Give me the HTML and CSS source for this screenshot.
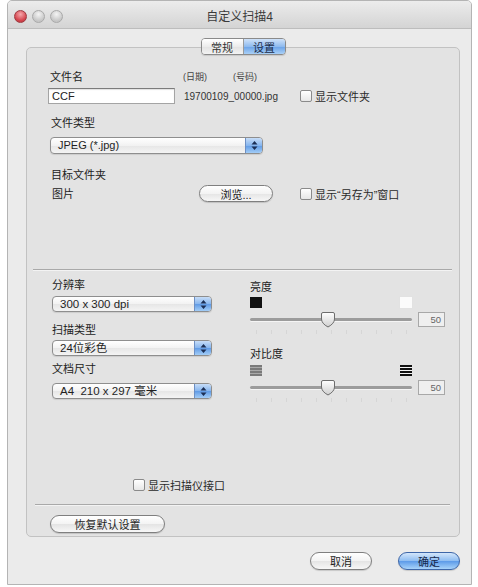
FILE: index.html
```html
<!DOCTYPE html>
<html lang="zh-CN">
<head>
<meta charset="utf-8">
<title>自定义扫描4</title>
<link rel="stylesheet" href="styles.css">
</head>
<body>
<div class="window">
  <header class="titlebar">
    <div class="lights">
      <span class="light close"></span>
      <span class="light"></span>
      <span class="light"></span>
    </div>
    <div class="title">自定义扫描4</div>
    <div></div>
  </header>

  <main class="body">
    <nav class="tabs">
      <span class="tab">常规</span>
      <span class="tab active">设置</span>
    </nav>

    <div class="group">
      <section class="upper">
        <div class="row r-heads">
          <span class="label c-name">文件名</span>
          <span class="hint c-date">(日期)</span>
          <span class="hint">(号码)</span>
        </div>
        <div class="row r-file">
          <div class="field">CCF</div>
          <span class="fname">19700109_00000.jpg</span>
          <label class="check"><span class="box"></span>显示文件夹</label>
        </div>
        <div class="row r-type-label"><span class="label">文件类型</span></div>
        <div class="row r-type">
          <div class="popup wide">
            <span class="popup-text">JPEG (*.jpg)</span>
            <span class="stepper">
              <svg width="7" height="11" viewBox="0 0 7 11"><path d="M3.5 1 L6.5 4.5 H0.5 Z M3.5 10 L6.5 6.5 H0.5 Z" fill="#1c2f55"/></svg>
            </span>
          </div>
        </div>
        <div class="row r-dest-label"><span class="label">目标文件夹</span></div>
        <div class="row r-dest">
          <span class="label c-folder">图片</span>
          <button class="btn browse">浏览...</button>
          <label class="check"><span class="box"></span>显示“另存为”窗口</label>
        </div>
      </section>

      <hr class="sep top-sep">

      <section class="lower">
        <div class="col-left">
          <span class="label">分辨率</span>
          <div class="popup p1">
            <span class="popup-text">300 x 300 dpi</span>
            <span class="stepper">
              <svg width="7" height="11" viewBox="0 0 7 11"><path d="M3.5 1 L6.5 4.5 H0.5 Z M3.5 10 L6.5 6.5 H0.5 Z" fill="#1c2f55"/></svg>
            </span>
          </div>
          <span class="label l2">扫描类型</span>
          <div class="popup p2">
            <span class="popup-text">24位彩色</span>
            <span class="stepper">
              <svg width="7" height="11" viewBox="0 0 7 11"><path d="M3.5 1 L6.5 4.5 H0.5 Z M3.5 10 L6.5 6.5 H0.5 Z" fill="#1c2f55"/></svg>
            </span>
          </div>
          <span class="label l3">文档尺寸</span>
          <div class="popup p3">
            <span class="popup-text">A4&nbsp; 210 x 297 毫米</span>
            <span class="stepper">
              <svg width="7" height="11" viewBox="0 0 7 11"><path d="M3.5 1 L6.5 4.5 H0.5 Z M3.5 10 L6.5 6.5 H0.5 Z" fill="#1c2f55"/></svg>
            </span>
          </div>
        </div>

        <div class="col-right">
          <span class="label l-bright">亮度</span>
          <div class="ends">
            <span class="sw dark"></span>
            <span class="sw light-sw"></span>
          </div>
          <div class="slider-row">
            <div class="slider">
              <span class="track"></span>
              <svg class="thumb" width="16" height="17" viewBox="0 0 16 17">
                <defs>
                  <linearGradient id="tg1" x1="0" y1="0" x2="0" y2="1">
                    <stop offset="0" stop-color="#ffffff"/>
                    <stop offset="1" stop-color="#cfcfcf"/>
                  </linearGradient>
                </defs>
                <path d="M3 1.5 H13 Q14.5 1.5 14.5 3 V8 Q14.5 12.5 8 16 Q1.5 12.5 1.5 8 V3 Q1.5 1.5 3 1.5 Z" fill="url(#tg1)" stroke="#6d6d6d"/>
              </svg>
            </div>
            <div class="num">50</div>
          </div>
          <div class="ticks"></div>

          <span class="label l-contrast">对比度</span>
          <div class="ends e2">
            <span class="sw lowc"></span>
            <span class="sw highc"></span>
          </div>
          <div class="slider-row">
            <div class="slider">
              <span class="track"></span>
              <svg class="thumb" width="16" height="17" viewBox="0 0 16 17">
                <defs>
                  <linearGradient id="tg2" x1="0" y1="0" x2="0" y2="1">
                    <stop offset="0" stop-color="#ffffff"/>
                    <stop offset="1" stop-color="#cfcfcf"/>
                  </linearGradient>
                </defs>
                <path d="M3 1.5 H13 Q14.5 1.5 14.5 3 V8 Q14.5 12.5 8 16 Q1.5 12.5 1.5 8 V3 Q1.5 1.5 3 1.5 Z" fill="url(#tg2)" stroke="#6d6d6d"/>
              </svg>
            </div>
            <div class="num">50</div>
          </div>
          <div class="ticks"></div>
        </div>
      </section>

      <div class="row r-iface">
        <label class="check"><span class="box"></span>显示扫描仪接口</label>
      </div>

      <hr class="sep bottom-sep">

      <div class="row r-reset">
        <button class="btn reset">恢复默认设置</button>
      </div>
    </div>

    <footer class="actions">
      <button class="btn cancel">取消</button>
      <button class="btn ok">确定</button>
    </footer>
  </main>
</div>
</body>
</html>
```

FILE: styles.css
```css
* {
  box-sizing: border-box;
}

html, body {
  margin: 0;
  padding: 0;
  background: #ffffff;
}

body {
  font-family: "Liberation Sans", "Noto Sans CJK SC", sans-serif;
  font-size: 11px;
  color: #2a2a2a;
}

/* ---- window frame ---- */
.window {
  margin-left: 7px;
  width: 465px;
  height: 585px;
  border: 1px solid #b4b4b4;
  border-radius: 5px 5px 0 0;
  background: #ebebeb;
  overflow: hidden;
}

.titlebar {
  height: 28px;
  display: grid;
  grid-template-columns: 1fr auto 1fr;
  align-items: center;
  background: linear-gradient(#ececec, #d4d4d4);
  border-bottom: 1px solid #bdbdbd;
}

.lights {
  display: flex;
  gap: 5px;
  padding-left: 6px;
  padding-top: 3px;
}

.light {
  width: 13px;
  height: 13px;
  border-radius: 50%;
  border: 1px solid #a9a9a9;
  background: radial-gradient(circle at 50% 30%, #f4f4f4, #c6c6c6 70%);
}

.light.close {
  border-color: #9e3a40;
  background: radial-gradient(circle at 50% 30%, #f6a7ab, #d4454e 65%, #b3323a);
}

.title {
  font-size: 12px;
  color: #3a3a3a;
  padding-top: 1px;
}

/* ---- tabs ---- */
.body {
  display: flex;
  flex-direction: column;
}

.tabs {
  position: relative;
  z-index: 1;
  align-self: center;
  margin-top: 9px;
  margin-left: 7px;
  display: flex;
  height: 17px;
  border: 1px solid #8a8a8a;
  border-radius: 4px;
  overflow: hidden;
  box-shadow: 0 1px 1px rgba(0,0,0,0.12);
}

.tab {
  width: 41px;
  display: flex;
  align-items: center;
  justify-content: center;
  background: linear-gradient(#ffffff, #ececec 50%, #e2e2e2 51%, #f3f3f3);
  color: #333;
}

.tab + .tab {
  border-left: 1px solid #9a9a9a;
}

.tab.active {
  width: 42px;
  background: linear-gradient(#cfe2f9, #8fbbef 50%, #6aa2e8 51%, #a9d0f7);
  color: #1b2c4a;
}

/* ---- group box ---- */
.group {
  margin: -8px 0 0 18px;
  width: 434px;
  height: 490px;
  border: 1px solid #c2c2c2;
  border-radius: 5px;
  background: #e3e3e3;
  display: flex;
  flex-direction: column;
}

.row {
  display: flex;
  align-items: center;
}

.label {
  display: block;
  line-height: 14px;
  height: 14px;
  color: #222;
}

.hint {
  font-size: 9px;
  color: #444;
  line-height: 14px;
}

.upper {
  padding-left: 21px;
}

.r-heads {
  margin-top: 22px;
  height: 14px;
}

.c-name {
  width: 135px;
  padding-left: 2px;
}

.c-date {
  width: 50px;
}

.r-file {
  margin-top: 4px;
  height: 16px;
}

.field {
  width: 127px;
  height: 16px;
  background: #ffffff;
  border: 1px solid #a4a4a4;
  border-top-color: #7c7c7c;
  box-shadow: inset 0 1px 1px rgba(0,0,0,0.12);
  padding-left: 3px;
  line-height: 14px;
  color: #222;
}

.fname {
  width: 116px;
  margin-left: 9px;
  font-size: 10px;
  color: #333;
}

.check {
  display: flex;
  align-items: center;
  gap: 3px;
  color: #2a2a2a;
}

.box {
  width: 12px;
  height: 12px;
  border: 1px solid #8a8a8a;
  border-radius: 2px;
  background: linear-gradient(#ffffff, #e7e7e7);
}

.r-type-label {
  margin-top: 12px;
}

.r-type-label .label,
.r-dest-label .label {
  padding-left: 3px;
}

.r-type {
  margin-top: 7px;
  padding-left: 2px;
}

/* ---- popup buttons ---- */
.popup {
  height: 17px;
  display: flex;
  align-items: stretch;
  border: 1px solid #8e8e8e;
  border-radius: 4px;
  background: linear-gradient(#ffffff, #f2f2f2 50%, #e6e6e6 51%, #f4f4f4);
  overflow: hidden;
  box-shadow: 0 1px 1px rgba(0,0,0,0.1);
}

.popup.wide {
  width: 213px;
}

.popup-text {
  flex: 1;
  padding-left: 7px;
  line-height: 15px;
  color: #1f1f1f;
}

.stepper {
  width: 17px;
  display: flex;
  align-items: center;
  justify-content: center;
  border-left: 1px solid #6c8fc4;
  background: linear-gradient(#c7ddf8, #86b5ee 50%, #5f9ae5 51%, #a3cdf7);
}

.r-dest-label {
  margin-top: 14px;
}

.r-dest {
  margin-top: 3px;
  height: 17px;
}

.c-folder {
  width: 151px;
  padding-left: 4px;
}

/* ---- push buttons ---- */
.btn {
  font-family: inherit;
  font-size: 11px;
  color: #222;
  height: 18px;
  padding: 0;
  border: 1px solid #7f7f7f;
  border-radius: 9px;
  background: linear-gradient(#ffffff, #f3f3f3 50%, #e4e4e4 51%, #f7f7f7);
  box-shadow: 0 1px 1px rgba(0,0,0,0.15);
}

.browse {
  width: 74px;
  height: 17px;
  margin-right: 27px;
}

/* ---- separators ---- */
.sep {
  border: 0;
  height: 2px;
  background: linear-gradient(#a9a9a9 0 1px, #f3f3f3 1px);
  margin: 0;
}

.top-sep {
  margin: 67px 7px 0 6px;
}

/* ---- lower settings ---- */
.lower {
  display: flex;
  padding: 7px 0 0 25px;
}

.col-left {
  width: 160px;
  display: flex;
  flex-direction: column;
}

.col-left .popup {
  height: 16px;
}

.col-left .popup-text {
  line-height: 14px;
  font-size: 11.5px;
}

.p1 { margin-top: 4px; }
.l2 { margin-top: 11px; }
.p2 { margin-top: 3px; }
.l3 { margin-top: 6px; }
.p3 { margin-top: 7px; }

.col-right {
  margin-left: 38px;
  width: 195px;
  display: flex;
  flex-direction: column;
}

.l-bright {
  margin-top: 2px;
}

.ends {
  margin-top: 3px;
  width: 162px;
  height: 11px;
  display: flex;
  justify-content: space-between;
}

.sw {
  width: 12px;
  height: 11px;
}

.dark {
  background: #111111;
}

.light-sw {
  background: #fbfbfb;
  box-shadow: 0 0 0 1px #e2e2e2;
}

.lowc {
  background: repeating-linear-gradient(#7a7a7a 0 2px, #a9a9a9 2px 3px);
}

.highc {
  background: repeating-linear-gradient(#111 0 2px, #f4f4f4 2px 3px);
}

.slider-row {
  margin-top: 4px;
  height: 15px;
  display: flex;
  align-items: center;
}

.slider {
  position: relative;
  width: 162px;
  height: 15px;
  display: flex;
  align-items: center;
}

.track {
  width: 100%;
  height: 3px;
  border-radius: 2px;
  background: #9c9c9c;
  box-shadow: 0 1px 0 #f5f5f5;
}

.thumb {
  position: absolute;
  left: 70px;
  top: -1px;
}

.num {
  margin-left: 6px;
  width: 27px;
  height: 15px;
  border: 1px solid #a8a8a8;
  background: #efefef;
  text-align: right;
  padding-right: 3px;
  font-size: 9.5px;
  line-height: 13px;
  color: #666;
}

.ticks {
  margin-top: 3px;
  margin-left: 6px;
  width: 152px;
  height: 4px;
  background: repeating-linear-gradient(to right, #d6d6d6 0 1px, transparent 1px 15px);
}

.l-contrast {
  margin-top: 13px;
}

.e2 {
  margin-top: 4px;
}

/* ---- bottom of the group ---- */
.r-iface {
  margin-top: auto;
  padding-left: 106px;
}

.bottom-sep {
  margin: 11px 9px 0 8px;
}

.r-reset {
  margin-top: 9px;
  padding-left: 23px;
  margin-bottom: 3px;
}

.reset {
  width: 115px;
}

/* ---- dialog buttons ---- */
.actions {
  margin-top: 15px;
  display: flex;
  justify-content: flex-end;
  gap: 26px;
  padding-right: 11px;
}

.cancel,
.ok {
  width: 62px;
}

.ok {
  border-color: #3d66a8;
  background: linear-gradient(#d3e6fb, #8dbcf1 50%, #5c9ae8 51%, #a8d3fa);
  color: #15294b;
}
```
